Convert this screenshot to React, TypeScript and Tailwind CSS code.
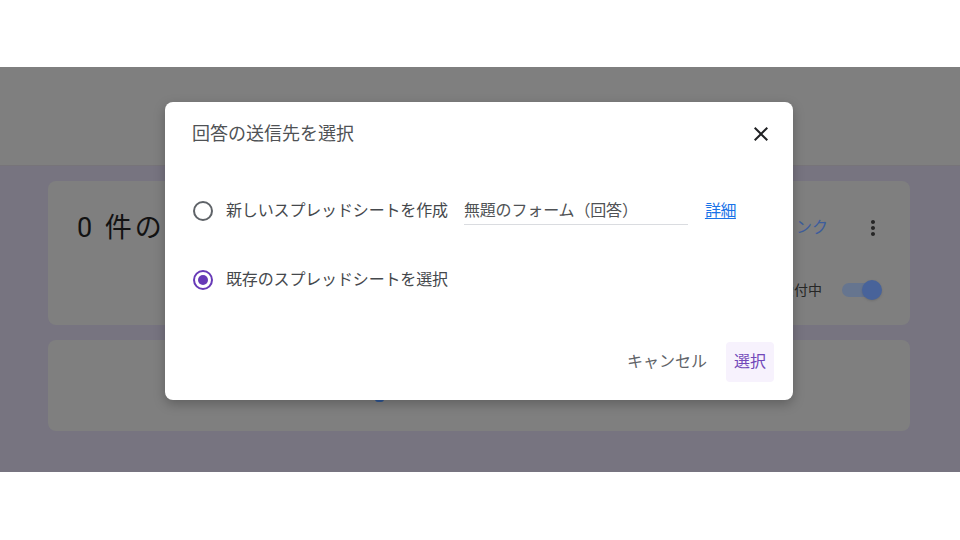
import React from 'react'

const font = { fontFamily: 'Roboto, "Noto Sans CJK JP", sans-serif' }

function Radio({ checked }: { checked?: boolean }) {
  return checked ? (
    <span className="w-[20px] h-[20px] rounded-full border-2 border-[#673ab7] flex items-center justify-center shrink-0">
      <span className="w-[10px] h-[10px] rounded-full bg-[#673ab7]" />
    </span>
  ) : (
    <span className="w-[20px] h-[20px] rounded-full border-2 border-[#5f6368] shrink-0" />
  )
}

function CloseIcon() {
  return (
    <svg width="24" height="24" viewBox="0 0 24 24" fill="#202124">
      <path d="M19 6.41L17.59 5 12 10.59 6.41 5 5 6.41 10.59 12 5 17.59 6.41 19 12 13.41 17.59 19 19 17.59 13.41 12z" />
    </svg>
  )
}

function MoreIcon() {
  return (
    <svg width="24" height="24" viewBox="0 0 24 24" fill="#262626">
      <path d="M12 8c1.1 0 2-.9 2-2s-.9-2-2-2-2 .9-2 2 .9 2 2 2zm0 2c-1.1 0-2 .9-2 2s.9 2 2 2 2-.9 2-2-.9-2-2-2zm0 6c-1.1 0-2 .9-2 2s.9 2 2 2 2-.9 2-2-.9-2-2-2z" />
    </svg>
  )
}

export default function App() {
  return (
    <div className="w-[960px] h-[540px] bg-white flex flex-col overflow-hidden" style={font}>
      <div className="h-[67px] shrink-0" />

      {/* dimmed page under the dialog */}
      <div className="h-[405px] shrink-0 relative bg-[#777480]">
        <div className="h-[99px] bg-[#7f7f7f] border-b border-[#777479]" />

        <div className="pl-[48px] pt-[15px] flex flex-col gap-[15px]">
          <div className="w-[862px] h-[144px] rounded-[8px] bg-[#7f7f7f] pt-[30px] pl-[29px] pr-[25px]">
            <div className="h-[34px] flex items-center justify-between">
              <span className="text-[27px] text-[#121212] tracking-[3px]">0&nbsp;件の回答</span>
              <div className="flex items-center gap-[33px]">
                <span className="text-[16px] text-[#3d5d9c]">にリンク</span>
                <MoreIcon />
              </div>
            </div>
            <div className="mt-[33px] h-[24px] flex items-center justify-end gap-[20px] pr-[3px]">
              <span className="text-[14px] text-[#262626]">受付中</span>
              <div className="relative w-[40px] h-[24px] flex items-center">
                <div className="w-[36px] h-[14px] rounded-full bg-[#66758f]" />
                <div className="absolute right-0 top-[2px] w-[20px] h-[20px] rounded-full bg-[#48639a] shadow" />
              </div>
            </div>
          </div>

          <div className="w-[862px] h-[91px] rounded-[8px] bg-[#7f7f7f] pl-[327px] pt-[46px]">
            <div className="w-[9px] h-[16px] rounded-[3px] bg-[#2f5796]" />
          </div>
        </div>

        {/* dialog */}
        <div className="absolute left-[165px] top-[35px] w-[628px] h-[298px] bg-white rounded-[8px] shadow-[0_4px_12px_rgba(0,0,0,0.25)] flex flex-col">
          <div className="pt-[20px] pl-[27px] pr-[20px] h-[44px] flex items-center justify-between">
            <span className="text-[18px] leading-[24px] text-[#4f5255]">回答の送信先を選択</span>
            <CloseIcon />
          </div>

          <div className="mt-[48px] pl-[28px] h-[34px] flex items-center">
            <Radio />
            <span className="ml-[13px] text-[16px] tracking-[-0.15px] text-[#45484c]">新しいスプレッドシートを作成</span>
            <div className="ml-[16px] w-[224px] h-[27px] flex items-center border-b border-[#dadce0]">
              <span className="text-[16px] tracking-[-0.15px] text-[#4f5255]">無題のフォーム（回答）</span>
            </div>
            <span className="ml-[17px] text-[16px] tracking-[-0.5px] text-[#1a73e8] underline underline-offset-2">詳細</span>
          </div>

          <div className="mt-[35px] pl-[28px] h-[34px] flex items-center">
            <Radio checked />
            <span className="ml-[13px] text-[16px] tracking-[-0.15px] text-[#45484c]">既存のスプレッドシートを選択</span>
          </div>

          <div className="mt-auto pb-[18px] pr-[19px] flex justify-end items-center gap-[11px]">
            <button className="h-[40px] px-[8px] text-[16px] text-[#5f6368]">キャンセル</button>
            <button className="h-[40px] w-[48px] rounded-[4px] bg-[#f7f2fd] text-[16px] text-[#7248b9]">選択</button>
          </div>
        </div>
      </div>

      <div className="flex-1" />
    </div>
  )
}
